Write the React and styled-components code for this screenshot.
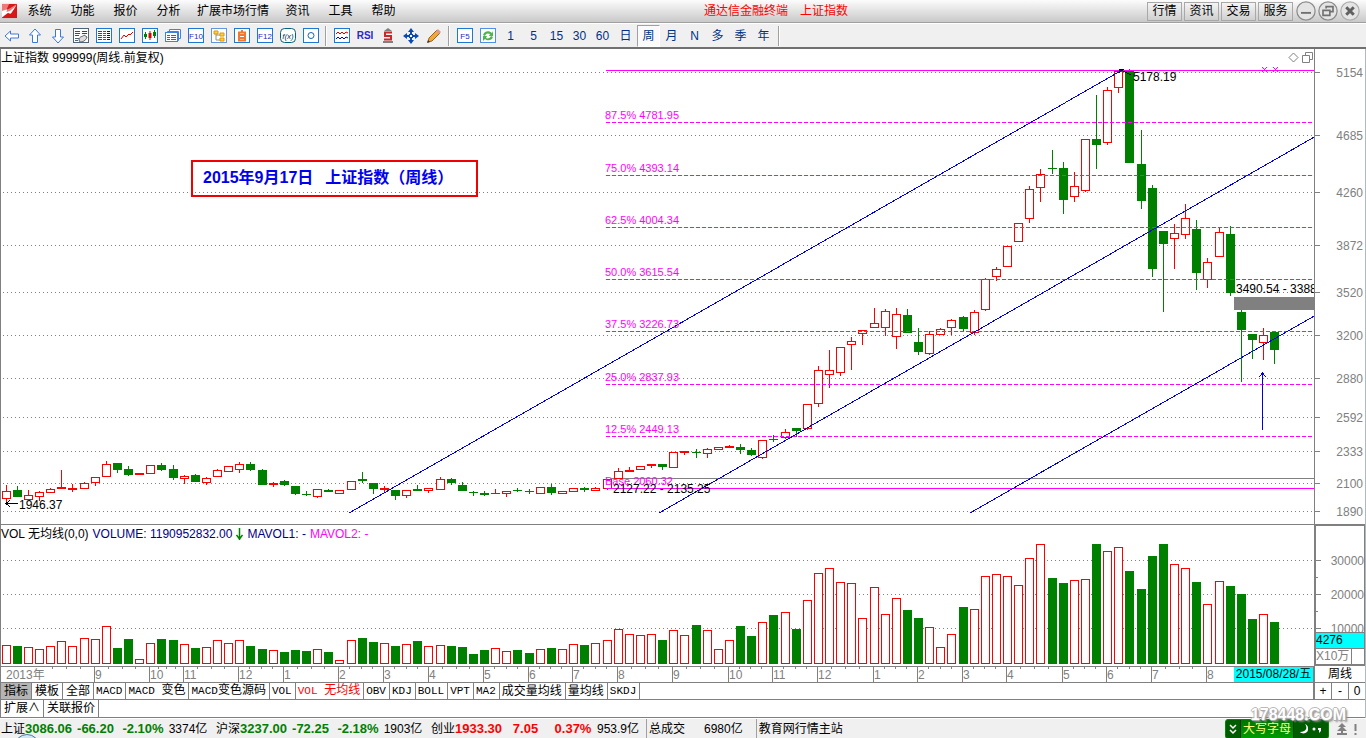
import * as React from 'react'
import styled, { createGlobalStyle, } from 'styled-components'

const SANS = '"Liberation Sans", "Noto Sans CJK SC", sans-serif'
const RED = '#ff0000'
const GREEN = '#008000'
const MAGENTA = '#ff00ff'
const BLUE = '#0000e0'
const GREY = '#808080'

const PRICE_TOP = 49
const PRICE_HEIGHT = 475
const VOLUME_TOP = 525
const VOLUME_BOTTOM = 664
const CANDLE_PITCH = 11.1274

// [color, body top, body bottom, high, low, volume top]
const CANDLES = [
	['r', 491, 499, 485, 502, 645],
	['g', 490, 497, 486, 497, 646],
	['r', 495, 500, 490, 500, 647],
	['r', 492, 497, 491, 501, 649],
	['r', 489, 493, 488, 493, 646],
	['r', 487, 489, 470, 489, 641],
	['r', 488, 490, 484, 492, 646],
	['r', 483, 489, 482, 489, 638],
	['r', 477, 483, 477, 486, 639],
	['r', 464, 477, 461, 477, 626],
	['g', 463, 470, 463, 473, 648],
	['g', 469, 475, 466, 476, 639],
	['r', 473, 475, 473, 475, 659],
	['r', 465, 474, 465, 474, 643],
	['g', 465, 470, 463, 471, 639],
	['g', 469, 478, 465, 480, 640],
	['r', 476, 479, 475, 484, 644],
	['g', 475, 482, 474, 482, 648],
	['r', 478, 483, 477, 485, 647],
	['r', 470, 477, 469, 477, 640],
	['r', 466, 472, 466, 472, 643],
	['r', 464, 470, 462, 473, 640],
	['g', 464, 470, 462, 471, 646],
	['g', 470, 485, 469, 485, 649],
	['r', 483, 485, 482, 487, 650],
	['g', 481, 485, 480, 486, 652],
	['g', 486, 494, 486, 495, 650],
	['g', 494, 495, 491, 496, 651],
	['r', 489, 497, 489, 498, 649],
	['g', 490, 492, 489, 492, 652],
	['r', 490, 494, 490, 494, 660],
	['r', 481, 490, 481, 490, 640],
	['g', 479, 481, 472, 483, 638],
	['g', 483, 489, 483, 494, 642],
	['r', 488, 490, 486, 492, 643],
	['g', 490, 496, 490, 500, 646],
	['r', 490, 496, 490, 498, 644],
	['g', 489, 491, 485, 491, 641],
	['r', 488, 491, 488, 493, 646],
	['r', 479, 490, 477, 490, 645],
	['g', 479, 483, 478, 485, 646],
	['g', 485, 491, 482, 491, 647],
	['g', 492, 493, 491, 496, 654],
	['g', 493, 495, 491, 496, 650],
	['r', 493, 494, 489, 494, 648],
	['r', 491, 494, 491, 497, 651],
	['g', 490, 491, 488, 492, 650],
	['g', 491, 492, 489, 494, 653],
	['r', 487, 494, 487, 494, 649],
	['g', 487, 493, 484, 495, 648],
	['r', 491, 494, 491, 494, 649],
	['r', 488, 492, 488, 492, 644],
	['g', 488, 490, 487, 492, 645],
	['r', 488, 491, 487, 491, 643],
	['r', 479, 489, 479, 490, 640],
	['r', 471, 479, 468, 479, 629],
	['r', 470, 472, 467, 472, 634],
	['r', 466, 470, 466, 470, 635],
	['r', 464, 466, 464, 468, 634],
	['g', 464, 467, 464, 470, 640],
	['r', 452, 468, 452, 468, 630],
	['r', 451, 453, 451, 455, 635],
	['g', 452, 453, 449, 458, 625],
	['r', 449, 454, 448, 458, 630],
	['r', 447, 450, 447, 450, 649],
	['r', 446, 448, 445, 448, 640],
	['g', 447, 450, 444, 454, 626],
	['g', 450, 455, 448, 456, 636],
	['r', 440, 458, 440, 459, 622],
	['g', 439, 440, 435, 442, 615],
	['r', 432, 438, 429, 439, 612],
	['g', 428, 431, 428, 437, 629],
	['r', 404, 429, 404, 430, 600],
	['r', 370, 404, 366, 407, 573],
	['r', 370, 375, 350, 388, 568],
	['r', 347, 373, 347, 376, 582],
	['r', 341, 345, 337, 370, 583],
	['r', 330, 334, 330, 345, 618],
	['r', 323, 328, 308, 328, 587],
	['r', 311, 328, 309, 336, 614],
	['r', 314, 337, 308, 349, 598],
	['g', 315, 333, 309, 333, 610],
	['g', 342, 352, 328, 355, 618],
	['r', 334, 354, 331, 355, 627],
	['r', 329, 335, 328, 335, 647],
	['r', 320, 328, 319, 335, 634],
	['g', 317, 329, 316, 331, 607],
	['r', 312, 333, 310, 335, 609],
	['r', 279, 310, 278, 311, 576],
	['r', 269, 277, 267, 281, 574],
	['r', 246, 267, 246, 267, 576],
	['r', 223, 242, 223, 242, 585],
	['r', 189, 219, 186, 223, 558],
	['r', 174, 188, 169, 202, 544],
	['g', 168, 169, 150, 174, 578],
	['g', 168, 200, 162, 214, 583],
	['r', 186, 197, 172, 202, 580],
	['r', 139, 191, 139, 192, 579],
	['g', 139, 145, 95, 169, 544],
	['r', 90, 143, 87, 145, 551],
	['r', 71, 88, 71, 93, 547],
	['g', 71, 163, 69, 163, 571],
	['g', 164, 201, 130, 209, 589],
	['g', 188, 269, 185, 277, 556],
	['g', 231, 244, 231, 312, 544],
	['r', 233, 239, 224, 269, 564],
	['r', 218, 235, 204, 239, 568],
	['g', 229, 273, 220, 290, 582],
	['r', 262, 280, 258, 288, 604],
	['r', 232, 257, 228, 257, 581],
	['g', 234, 293, 226, 296, 586],
	['g', 312, 330, 310, 382, 594],
	['g', 334, 340, 334, 359, 619],
	['r', 335, 343, 328, 360, 614],
	['g', 332, 350, 332, 364, 622],
]

const PRICE_LEVELS = [
	[5154, 72], [4685, 135], [4260, 192], [3872, 245], [3520, 292], [3200, 335],
	[2880, 378], [2592, 417], [2333, 451], [2100, 483], [1890, 511],
]

const VOLUME_LEVELS = [[30000, 560], [20000, 594], [10000, 628]]

const FIB_LEVELS = [
	['87.5% 4781.95', 122],
	['75.0% 4393.14', 175],
	['62.5% 4004.34', 227],
	['50.0% 3615.54', 279],
	['37.5% 3226.73', 331],
	['25.0% 2837.93', 384],
	['12.5% 2449.13', 436],
]

const MONTHS = [
	[9, 94], [10, 149], [11, 183], [12, 238], [1, 283], [2, 338], [3, 383], [4, 428],
	[5, 483], [6, 528], [7, 572], [8, 617], [9, 672], [10, 728], [11, 772], [12, 817],
	[1, 873], [2, 917], [3, 962], [4, 1006], [5, 1062], [6, 1106], [7, 1151], [8, 1206],
]

const MENUS = ['系统', '功能', '报价', '分析', '扩展市场行情', '资讯', '工具', '帮助']
const LINKS = ['行情', '资讯', '交易', '服务']
const PERIODS = ['1', '5', '15', '30', '60', '日', '周', '月', 'N', '多', '季', '年']
const INDICATORS = [
	'MACD', 'MACD 变色', 'MACD变色源码', 'VOL', 'VOL 无均线', 'OBV', 'KDJ', 'BOLL',
	'VPT', 'MA2', '成交量均线', '量均线', 'SKDJ',
]
const QUOTES = [
	['上证', '3086.06', '-66.20', '-2.10%', '3374亿', GREEN],
	['沪深', '3237.00', '-72.25', '-2.18%', '1903亿', GREEN],
	['创业', '1933.30', '7.05', '0.37%', '953.9亿', RED],
]

const GlobalStyle = createGlobalStyle`
	body {
		margin: 0;
		background: #fff;
		overflow: hidden;
	}

	*, *::before, *::after {
		box-sizing: border-box;
	}

	button {
		padding: 0;
		border: 0;
		background: none;
		color: inherit;
		font: inherit;
	}
`

const Base = styled.main`
	position: relative;
	display: flex;
	flex-direction: column;
	min-height: 100vh;
	font-family: ${SANS};
	font-size: 12px;
	line-height: 16px;
	color: #000;
	white-space: nowrap;
	overflow: hidden;
`

const MenuBar = styled.header`
	display: flex;
	align-items: center;
	height: 23px;
	padding-left: 2px;
	background: linear-gradient(#fcfcfc, #c9c9c9);
	border-bottom: 1px solid #a0a0a0;
`

const Menus = styled.nav`
	display: flex;
	margin-left: 1px;
`

const MenuItem = styled.button`
	min-width: 43px;
	padding: 0 7px;
	text-align: center;
`

const WindowTitle = styled.h1`
	display: flex;
	flex: 1;
	justify-content: center;
	gap: 12px;
	margin: 0;
	font-size: 12px;
	font-weight: normal;
	color: ${RED};
`

const WindowControls = styled.div`
	display: flex;
	align-items: center;
	gap: 2px;
	padding-right: 6px;
`

const LinkButton = styled.button`
	width: 35px;
	height: 19px;
	border: 1px solid #a8a8a8;
	background: linear-gradient(#f4f4f4, #cfcfcf);
	line-height: 16px;
`

const RoundButton = styled.button`
	display: flex;
	width: 20px;
	height: 20px;
	margin-left: ${props => props.$first ? 1 : 0}px;
`

const ToolBar = styled.div`
	display: flex;
	align-items: center;
	height: 26px;
	background: #f0f0f0;
	border-top: 1px solid #fff;
	border-bottom: 2px solid #707070;
`

const Tool = styled.button`
	display: flex;
	align-items: center;
	justify-content: center;
	width: 23px;
	height: 22px;
	color: #003087;
	border: 1px solid transparent;
	${props => props.$pressed && `
		background: #fafafa;
		border-color: #a0a0a0 #fff #fff #a0a0a0;
	`}
`

const Separator = styled.span`
	width: 2px;
	height: 20px;
	margin: 0 3px;
	background: #a0a0a0;
	border-right: 1px solid #fff;
`

const Workspace = styled.section`
	border-left: 1px solid ${GREY};
	border-right: 1px solid #b0b8c0;
`

const Pane = styled.div`
	position: relative;
	display: grid;
	grid-template-columns: 1fr 51px;
	${props => props.$divided && `border-bottom: 1px solid ${GREY};`}
`

const Plot = styled.svg`
	display: block;
	width: 100%;
	min-width: 0;
`

const PaneHeader = styled.div`
	position: absolute;
	top: 1px;
	left: 0;
	display: flex;
	gap: ${props => props.$gap}px;
`

const Colored = styled.span`
	color: ${props => props.$color};
`

const PaneTools = styled.div`
	position: absolute;
	top: 3px;
	right: 52px;
	display: flex;
	gap: 3px;
`

const PaneTool = styled.button`
	display: flex;
`

const Annotation = styled.div`
	position: absolute;
	top: 111px;
	left: 190px;
	display: flex;
	gap: 12px;
	padding: 6px 23px 7px 10px;
	border: 2px solid #f00000;
	color: #0000f0;
	font-size: 16px;
	font-weight: bold;
	line-height: 20px;
`

const Axis = styled.div`
	border-left: 1px solid ${GREY};
`

const VolumeAxis = styled.div`
	display: flex;
	flex-direction: column;
	border: 1px solid ${GREY};
	border-width: 1px 1px 2px 2px;
`

const VolumeValue = styled.div`
	height: 17px;
	border: 1px solid ${GREY};
	border-width: 1px 0;
	background: #00ffff;
	line-height: 14px;
`

const VolumeUnit = styled.div`
	width: 36px;
	height: 15px;
	border: 1px solid ${GREY};
	border-width: 0 1px 0 0;
	color: ${GREY};
	line-height: 14px;
`

const Footer = styled.div`
	display: grid;
	grid-template-columns: 1fr 52px;
`

const Row = styled.div`
	display: flex;
	height: ${props => props.$height}px;
	border-bottom: 1px solid ${GREY};
	${props => props.$top && `border-top: 1px solid ${GREY};`}
`

const CurrentDate = styled.time`
	width: 79px;
	flex: none;
	background: #00ffff;
	line-height: 14px;
	text-align: center;
`

const Corner = styled.div`
	display: flex;
	border-left: 2px solid ${GREY};
	border-bottom: 1px solid ${GREY};
	line-height: 15px;
`

const CornerCell = styled.button`
	flex: 1;
	text-align: center;
	border-right: ${props => props.$last ? 0 : 1}px solid ${GREY};
`

const Tab = styled.button`
	padding: 0 3px 0 2px;
	border-right: 1px solid ${GREY};
	color: ${props => props.$active ? RED : '#000'};
	background: ${props => props.$selected ? '#b4b4b4' : '#fff'};
	line-height: 15px;
	${props => props.$wide && `
		padding: 0 3px;
	`}
`

const Latin = styled.span`
	font-family: "Liberation Mono", monospace;
	font-size: 11px;
	white-space: pre;
`

const StatusBar = styled.footer`
	position: relative;
	display: flex;
	flex: 1;
	align-items: center;
	min-height: 20px;
	margin-top: 1px;
	padding-left: 1px;
	background: #f0f0f0;
	overflow: hidden;
`

const Quote = styled.div`
	display: grid;
	grid-template-columns: 24px 46px 49px 46px 44px;
	margin-right: 6px;
	text-align: center;
`

const Figure = styled.strong`
	font-size: 13px;
	color: ${props => props.$color};
`

const StatusCell = styled.div`
	display: flex;
	gap: 19px;
	height: 20px;
	padding: 2px ${props => props.$right || 0}px 0 2px;
	border-left: 1px solid #a0a0a0;
`

const StatusEnd = styled.div`
	display: flex;
	align-items: center;
	height: 20px;
	margin-left: auto;
	padding-right: 6px;
`

const InputMethod = styled.div`
	display: flex;
	width: 104px;
	height: 20px;
	border: 1px solid #008a00;
	border-radius: 3px;
	background: #005c00;
	overflow: hidden;
`

const InputMode = styled.button`
	width: 54px;
	border: 1px solid #003800;
	border-width: 0 1px;
	background: linear-gradient(#007400, #009c00);
	color: #ffff80;
	line-height: 18px;
`

const StartOrb = styled.span`
	position: absolute;
	left: 14px;
	top: 15px;
	width: 26px;
	height: 26px;
	border: 1px solid #4a7898;
	border-radius: 50%;
	background: linear-gradient(#d8ecf8, #78a8c8);
`

const Watermark = styled.div`
	position: absolute;
	right: 20px;
	bottom: 14px;
	color: #fff;
	font-size: 16px;
	font-weight: bold;
	line-height: 20px;
	text-shadow: 1px 0 #aaa, -1px 0 #bbb, 0 1px #aaa, 0 -1px #bbb, 2px 2px 2px #888;
`

const Icon = ({ children, size = 16, }) => (
	<svg width={size} height={size} viewBox="0 0 16 16" fill="none" aria-hidden="true">
		{children}
	</svg>
)

const Frame = ({ children, color = '#1e78d2', }) => (
	<Icon>
		<rect x="0.5" y="0.5" width="15" height="14" fill="#fff" stroke={color} />
		{children}
	</Icon>
)

const Logo = () => (
	<svg width="15" height="16" viewBox="0 0 17 18" aria-hidden="true">
		<path d="M0 1H17V17H0Z" fill="#d81818" />
		<path d="M0 1H8L5 8L9 6L17 1L12 9L9 12L5 11L1 16H0Z" fill="#f07878" />
		<path d="M0 9L6 7L5 10L9 9L16 3L10 12L7 11L0 16Z" fill="#fff" />
	</svg>
)

const FRAME_TOOLS = [
	{
		name: '后退',
		icon: <Icon><path d="M1 8L6.500 3V6H14.500V10H6.500V13Z" fill="#fff" stroke="#3c78dc" /></Icon>,
	},
	{
		name: '上移',
		icon: <Icon><path d="M8 1L13.500 7H10.500V14.500H5.500V7H2.500Z" fill="#fff" stroke="#3c78dc" /></Icon>,
	},
	{
		name: '下移',
		icon: <Icon><path d="M8 15L2.500 9H5.500V1.500H10.500V9H13.500Z" fill="#fff" stroke="#3c78dc" /></Icon>,
	},
	{
		name: '自选设置',
		icon: (
			<Frame color="#506478">
				<path d="M2 3.500H7M2 5.500H7M2 7.500H6" stroke="#008000" />
				<path d="M9 3.500H14M9 5.500H14" stroke="#e00000" />
				<path d="M2 10.500H6M2 12.500H5" stroke="#506478" />
				<path d="M6 12C6 8 10 9 11 7L14 9C13 13 9 14 7 14Z" fill="#ddd" stroke="#606060" />
			</Frame>
		),
	},
	{
		name: '行情列表',
		icon: (
			<Frame>
				<path d="M2 3.500H6M2 5.500H6M2 7.500H6M2 9.500H6M2 11.500H6" stroke="#f00000" />
				<path d="M7 3.500H10M7 5.500H10M7 7.500H10M7 9.500H10M7 11.500H10" stroke="#009000" />
				<path d="M11 3.500H14M11 5.500H14M11 7.500H14M11 9.500H14M11 11.500H14" stroke="#0000f0" />
			</Frame>
		),
	},
	{
		name: '分时图',
		icon: <Frame><path d="M2 11L5 7L7 9L10 6L11 7L14 4" stroke="#e00000" /></Frame>,
	},
	{
		name: 'K线图',
		icon: (
			<Frame>
				<path d="M3.500 4V11M12.500 2V10" stroke="#008000" />
				<path d="M8 3V12" stroke="#e00000" />
				<path d="M2 6H5V9H2ZM11 4H14V8H11Z" fill="#008000" />
				<path d="M6.500 5H9.500V10H6.500Z" fill="#e00000" />
			</Frame>
		),
	},
	{
		name: '多窗口',
		icon: (
			<Icon>
				<path d="M4.500 3V1.500H15.500V10.500H13" fill="#fff" stroke="#4082dc" />
				<path d="M2.500 5V3.500H13.500V12.500H12" fill="#fff" stroke="#4082dc" />
				<rect x="0.5" y="4.500" width="12" height="9" fill="#fff" stroke="#4082dc" />
				<path d="M2 7.500H5M6 7.500H11M2 9.500H5M6 9.500H11M2 11.500H5M6 11.500H11" stroke="#506478" />
			</Icon>
		),
	},
	{ name: '基本资料', label: 'F10', },
	{
		name: '板块',
		icon: (
			<Frame color="#6496dc">
				<path d="M5 5V12H9M5 7H9" stroke="#909090" />
				<path d="M3 3H7V6H3ZM9 5H13V8H9ZM9 10H13V13H9Z" fill="#ffd040" stroke="#e09800" />
			</Frame>
		),
	},
	{
		name: '自选股',
		icon: (
			<Frame>
				<path d="M5 4.500H11V12.500H5ZM5 7H11M5 10H11M8 2V4" stroke="#f07830" strokeWidth="2" />
			</Frame>
		),
	},
	{ name: '交易', label: 'F12', },
	{ name: '公式', label: 'f(x)', round: true, },
	{
		name: '选项',
		icon: <Frame><circle cx="8" cy="7.500" r="3" stroke="#1464b4" /></Frame>,
	},
]

const DRAW_TOOLS = [
	{
		name: '指标',
		icon: (
			<Frame>
				<path d="M2 6L4 4L6 6L8 4L10 6L12 4L14 5" stroke="#e00000" />
				<path d="M2 11L4 9L6 11L8 9L10 11L12 9L14 10" stroke="#0000e0" />
			</Frame>
		),
	},
	{ name: 'RSI', label: 'RSI', plain: true, },
	{
		name: '资金',
		icon: (
			<Icon>
				<path d="M3 13H13V15H3ZM8 0L12 3H4Z" fill="#808080" />
				<path d="M12 4.500H5V8H11V11.500H4" stroke="#c82828" strokeWidth="2" />
			</Icon>
		),
	},
	{
		name: '移动',
		icon: (
			<Icon>
				<path d="M8 0L11 4H5ZM8 16L5 12H11ZM0 8L4 5V11ZM16 8L12 11V5Z" fill="#0a4ab4" />
				<path d="M8 3V13M3 8H13" stroke="#0a4ab4" strokeWidth="2" />
				<rect x="6.500" y="6.500" width="3" height="3" fill="#fff" stroke="#0a4ab4" />
			</Icon>
		),
	},
	{
		name: '画线',
		icon: (
			<Icon>
				<path d="M2 14L3 10L11 2L14 5L6 13Z" fill="#f0a838" stroke="#a06020" />
				<path d="M10 3L12 1L15 4L13 6Z" fill="#d89898" />
				<path d="M1 15L2 12L4 14Z" fill="#333" />
			</Icon>
		),
	},
]

const LabelIcon = ({ label, round, plain, }) => (
	<Icon>
		{!plain && (
			<rect
				x="0.5"
				y="0.5"
				width="15"
				height="14"
				rx={round ? 4 : 0}
				fill="#fff"
				stroke={round ? '#006080' : '#1e78d2'}
			/>
		)}
		<text
			x="8"
			y="11"
			textAnchor="middle"
			fontSize={plain ? 10 : 8}
			fontWeight={plain ? 'bold' : 'normal'}
			fontStyle={round ? 'italic' : 'normal'}
			fill={round ? '#004060' : '#2828d0'}
		>
			{label}
		</text>
	</Icon>
)

const ToolGroup = ({ tools, }) => tools.map(({ name, icon, ...label }) => (
	<Tool key={name} aria-label={name}>
		{icon || <LabelIcon {...label} />}
	</Tool>
))

const candleX = index => Math.floor(2.125 + CANDLE_PITCH * index)

const Bar = ({ x, top, bottom, rising, }) => (
	rising && bottom - top > 2
		? <rect x={x + 0.5} y={top + 0.5} width="8" height={bottom - top - 1} fill="#fff" stroke={RED} />
		: <rect x={x} y={top} width="9" height={bottom - top} fill={rising ? RED : GREEN} />
)

const GridLines = ({ levels, }) => levels.map(([value, y]) => (
	<line key={value} x1="3" x2="100%" y1={y + 0.5} y2={y + 0.5} stroke={GREY} strokeDasharray="1 3" />
))

const PricePlot = () => (
	<Plot height={PRICE_HEIGHT} shapeRendering="crispEdges" role="img" aria-label="上证指数周线">
		<g transform={`translate(-1 -${PRICE_TOP})`}>
			<GridLines levels={PRICE_LEVELS} />
			<line x1="611" x2="101%" y1="478.5" y2="478.5" stroke={GREY} />
			{CANDLES.map(([color, top, bottom, high, low], index) => {
				const x = candleX(index)

				return (
					<g key={index}>
						<rect x={x + 4} y={high} width="1" height={low - high} fill={color === 'r' ? RED : GREEN} />
						<Bar x={x} top={top} bottom={bottom} rising={color === 'r'} />
					</g>
				)
			})}
			<g stroke={MAGENTA}>
				<line x1="606" x2="101%" y1="70.5" y2="70.5" />
				<line x1="606" x2="101%" y1="488.5" y2="488.5" />
				{FIB_LEVELS.map(([label, y]) => (
					<line key={label} x1="606" x2="101%" y1={y + 0.5} y2={y + 0.5} strokeDasharray="4 2" />
				))}
				<path d="M1262 67L1267 72M1267 67L1262 72M1273 67L1278 72M1278 67L1273 72" />
			</g>
			<g stroke={BLUE} fill="none">
				<path d="M349 513L1124 69" />
				<path d="M659 513L1330 128" />
				<path d="M970 513L1330 307" />
				<path d="M1262.5 430V373M1259 377L1262.5 373L1266 377" />
			</g>
			<rect x="1234" y="297" width="100%" height="13" fill={GREY} />
			<path d="M18 503.500H6M10 500L6 503.500L10 507" stroke="#000" fill="none" />
			<path d="M1119 73V69H1124M1119 69L1131 75" stroke="#000" fill="none" />
			<g fontSize="11" fill={MAGENTA}>
				{FIB_LEVELS.map(([label, y]) => (
					<text key={label} x="605" y={y - 3}>{label}</text>
				))}
				<text x="605" y="485">Base 2060.32</text>
			</g>
			<g fontSize="12">
				<text x="1133" y="81">5178.19</text>
				<text x="1236" y="293">3490.54 - 3388.12</text>
				<text x="613" y="493">2127.22 - 2135.25</text>
				<text x="19" y="509">1946.37</text>
			</g>
		</g>
	</Plot>
)

const VolumePlot = () => (
	<Plot height="140" shapeRendering="crispEdges" role="img" aria-label="成交量">
		<g transform={`translate(-1 -${VOLUME_TOP})`}>
			<GridLines levels={VOLUME_LEVELS} />
			{CANDLES.map(([color, , , , , top], index) => (
				<Bar key={index} x={candleX(index)} top={top} bottom={VOLUME_BOTTOM} rising={color === 'r'} />
			))}
		</g>
	</Plot>
)

const AxisLabels = ({ levels, offset, height, minor = [], }) => (
	<Plot height={height} shapeRendering="crispEdges">
		<g transform={`translate(0 -${offset})`} fontSize="12" fill={GREY}>
			{minor.map(y => (
				<line key={y} x1="0" x2="2" y1={y + 0.5} y2={y + 0.5} stroke={GREY} />
			))}
			{levels.map(([value, y]) => (
				<React.Fragment key={value}>
					<line x1="0" x2="5" y1={y + 0.5} y2={y + 0.5} stroke={GREY} />
					<text x="48" y={y + 5} textAnchor="end">{value}</text>
				</React.Fragment>
			))}
		</g>
	</Plot>
)

const DatePlot = () => (
	<Plot height="15" shapeRendering="crispEdges">
		<g transform="translate(-1 0)" fontSize="12" fill={GREY} stroke="none">
			<text x="6" y="12">2013年</text>
			{MONTHS.map(([month, x], index) => {
				const previous = index ? MONTHS[index - 1][1] : 38

				return (
					<React.Fragment key={x}>
						<rect x={x} y="0" width="1" height="15" />
						{[1, 2, 3].map(step => (
							<rect
								key={step}
								x={Math.round(previous + (x - previous) * step / 4)}
								y="0"
								width="1"
								height="2"
							/>
						))}
						<text x={x + 1} y="12">{month}</text>
					</React.Fragment>
				)
			})}
		</g>
	</Plot>
)

const MixedLabel = ({ text, }) => (
	text
		.split(/([A-Z0-9 ]+)/)
		.filter(Boolean)
		.map(part => /^[A-Z0-9 ]/.test(part) ? <Latin key={part}>{part}</Latin> : part)
)

const App = () => {
	const [period, setPeriod, ] = React.useState('周')
	const [indicator, setIndicator, ] = React.useState('VOL 无均线')

	return (
		<Base>
			<GlobalStyle />
			<MenuBar>
				<Logo />
				<Menus>
					{MENUS.map(menu => <MenuItem key={menu}>{menu}</MenuItem>)}
				</Menus>
				<WindowTitle>
					<span>通达信金融终端</span>
					<span>上证指数</span>
				</WindowTitle>
				<WindowControls>
					{LINKS.map(link => <LinkButton key={link}>{link}</LinkButton>)}
					<RoundButton $first aria-label="最小化">
						<Icon size={20}>
							<circle cx="8" cy="8" r="7.300" fill="#e4e4e4" stroke="#8c8c8c" />
							<path d="M4 9.500H12" stroke="#707070" strokeWidth="1.500" />
						</Icon>
					</RoundButton>
					<RoundButton aria-label="还原">
						<Icon size={20}>
							<circle cx="8" cy="8" r="7.300" fill="#e4e4e4" stroke="#8c8c8c" />
							<path d="M6.500 6V4.500H12V8.500H10M4 7.500H9.500V11.500H4Z" stroke="#707070" strokeWidth="1.300" />
						</Icon>
					</RoundButton>
					<RoundButton aria-label="关闭">
						<Icon size={20}>
							<circle cx="8" cy="8" r="7.300" fill="#e4e4e4" stroke="#b0b0b0" />
							<path d="M5 5L11 11M11 5L5 11" stroke="#606060" strokeWidth="2.400" />
						</Icon>
					</RoundButton>
				</WindowControls>
			</MenuBar>
			<ToolBar>
				<ToolGroup tools={FRAME_TOOLS} />
				<Separator />
				<ToolGroup tools={DRAW_TOOLS} />
				<Separator />
				<Tool aria-label="F5"><LabelIcon label="F5" /></Tool>
				<Tool aria-label="刷新">
					<Frame color="#5090e8">
						<path d="M3 7C4 3 9 2 12 5L13 3V8H9L10 6C8 5 6 5 5 8ZM13 9C12 13 7 13 5 11L3 13V8H7L6 10C8 11 10 10 11 8Z" fill="#50b450" />
					</Frame>
				</Tool>
				{PERIODS.map(item => (
					<Tool
						key={item}
						$pressed={item === period}
						aria-pressed={item === period}
						onClick={() => setPeriod(item)}
					>
						{item}
					</Tool>
				))}
				<Separator />
			</ToolBar>
			<Workspace>
				<Pane $divided>
					<PricePlot />
					<Axis>
						<AxisLabels levels={PRICE_LEVELS} offset={PRICE_TOP} height={PRICE_HEIGHT} />
					</Axis>
					<PaneHeader>上证指数 999999(周线.前复权)</PaneHeader>
					<PaneTools>
						<PaneTool aria-label="标记">
							<svg width="11" height="11"><path d="M5.500 1L10 5.500L5.500 10L1 5.500Z" fill="none" stroke={GREY} /></svg>
						</PaneTool>
						<PaneTool aria-label="窗口">
							<svg width="11" height="11"><path d="M3.500 3V0.500H10.500V7.500H8M0.500 3.500H7.500V10.500H0.500Z" fill="none" stroke={GREY} /></svg>
						</PaneTool>
					</PaneTools>
					<Annotation>
						<span>2015年9月17日</span>
						<span>上证指数（周线）</span>
					</Annotation>
				</Pane>
				<Pane>
					<VolumePlot />
					<VolumeAxis>
						<AxisLabels levels={VOLUME_LEVELS} offset={526} height={106} minor={[577, 611]} />
						<VolumeValue>4276</VolumeValue>
						<VolumeUnit>X10万</VolumeUnit>
					</VolumeAxis>
					<PaneHeader $gap={4}>
						<span>VOL 无均线(0,0)</span>
						<Colored $color="#000080">VOLUME: 1190952832.00</Colored>
						<svg width="7" height="16"><path d="M3.500 2V14M0.500 9L3.500 13L6.500 9" fill="none" stroke={GREEN} strokeWidth="1.500" /></svg>
						<Colored $color="#000080">MAVOL1: -</Colored>
						<Colored $color={MAGENTA}>MAVOL2: -</Colored>
					</PaneHeader>
				</Pane>
				<Footer>
					<Row $height={17} $top>
						<DatePlot />
						<CurrentDate dateTime="2015-08-28">2015/08/28/五</CurrentDate>
					</Row>
					<Corner>
						<CornerCell $last>周线</CornerCell>
					</Corner>
					<Row $height={17}>
						<Tab $wide $selected>指标</Tab>
						<Tab $wide>模板</Tab>
						<Tab $wide>全部</Tab>
						{INDICATORS.map(item => (
							<Tab key={item} $active={item === indicator} onClick={() => setIndicator(item)}>
								<MixedLabel text={item} />
							</Tab>
						))}
					</Row>
					<Corner>
						<CornerCell>+</CornerCell>
						<CornerCell>-</CornerCell>
						<CornerCell $last>0</CornerCell>
					</Corner>
				</Footer>
				<Row $height={18}>
					<Tab $wide>扩展∧</Tab>
					<Tab $wide>关联报价</Tab>
				</Row>
			</Workspace>
			<StatusBar>
				{QUOTES.map(([name, price, change, percent, amount, color]) => (
					<Quote key={name}>
						<span>{name}</span>
						<Figure $color={color}>{price}</Figure>
						<Figure $color={color}>{change}</Figure>
						<Figure $color={color}>{percent}</Figure>
						<span>{amount}</span>
					</Quote>
				))}
				<StatusCell $right={13}>
					<span>总成交</span>
					<span>6980亿</span>
				</StatusCell>
				<StatusCell>教育网行情主站</StatusCell>
				<StatusEnd>
					<InputMethod>
						<svg width="14" height="18"><path d="M4 5L7 8L10 5M4 10L7 13L10 10" fill="none" stroke="#fff" strokeWidth="1.500" /></svg>
						<InputMode>大写字母</InputMode>
						<svg width="34" height="18">
							<path d="M11 4C14 8 12 12 6 12C9 15 15 13 14 8C14 6 13 5 11 4Z" fill="#fff" />
							<circle cx="20" cy="9" r="1.500" fill="#fff" />
							<path d="M24 8H27V11L25 13L25 10H24Z" fill="#fff" />
						</svg>
					</InputMethod>
					<svg width="31" height="20">
						<path d="M13 4L17 8H9ZM13 7L18 12H8ZM12 12H14V14H18V16H8V14H12Z" fill={GREY} />
						<path d="M26.500 5V12M26.500 14V16" stroke={GREY} strokeWidth="2" />
					</svg>
				</StatusEnd>
				<StartOrb />
			</StatusBar>
			<Watermark>178448.COM</Watermark>
		</Base>
	)
}

export default App
